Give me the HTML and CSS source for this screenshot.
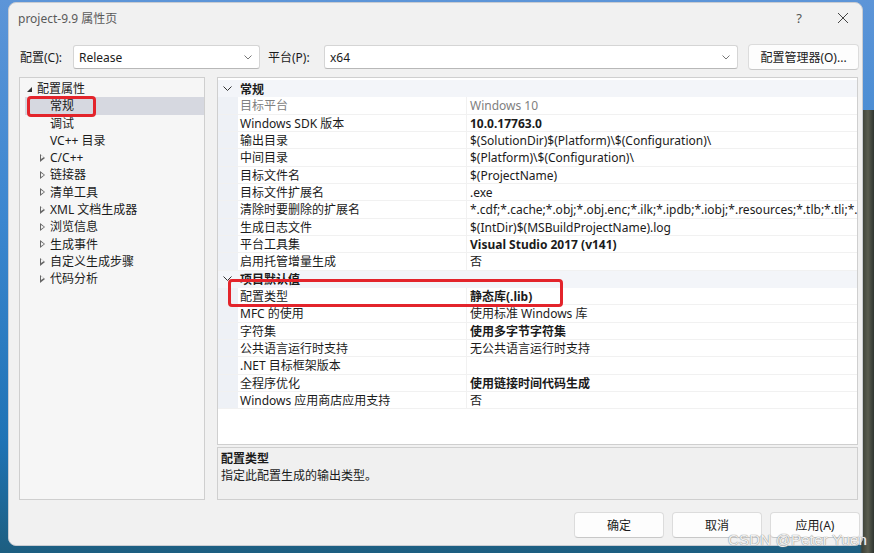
FILE: index.html
```html
<!DOCTYPE html>
<html>
<head>
  <title>project-9.9 属性页</title>
  <link rel="stylesheet" href="styles.css">
</head>
<body>
  <div class="dialog">

    <div class="titlebar">
      <div class="title">project-9.9 属性页</div>
      <div class="help">?</div>
      <div class="close">
        <svg width="12" height="12" viewBox="0 0 12 12"><path d="M1 1L11 11M11 1L1 11" stroke="#444" stroke-width="1" fill="none"/></svg>
      </div>
    </div>

    <div class="toolbar">
      <span class="label">配置(C):</span>
      <div class="combo combo-config"><span>Release</span><svg class="arrow" width="8" height="5" viewBox="0 0 8 5"><path d="M0.5 0.5L4 4L7.5 0.5" stroke="#777" fill="none"/></svg></div>
      <span class="label label-platform">平台(P):</span>
      <div class="combo combo-platform"><span>x64</span><svg class="arrow" width="8" height="5" viewBox="0 0 8 5"><path d="M0.5 0.5L4 4L7.5 0.5" stroke="#777" fill="none"/></svg></div>
      <button class="btn btn-manager">配置管理器(O)...</button>
    </div>

    <div class="main">
      <div class="tree">
        <div class="node root"><span class="tri-open"></span>配置属性</div>
        <div class="node leaf selected">常规</div>
        <div class="node leaf">调试</div>
        <div class="node leaf">VC++ 目录</div>
        <div class="node"><span class="tri"></span>C/C++</div>
        <div class="node"><span class="tri"></span>链接器</div>
        <div class="node"><span class="tri"></span>清单工具</div>
        <div class="node"><span class="tri"></span>XML 文档生成器</div>
        <div class="node"><span class="tri"></span>浏览信息</div>
        <div class="node"><span class="tri"></span>生成事件</div>
        <div class="node"><span class="tri"></span>自定义生成步骤</div>
        <div class="node"><span class="tri"></span>代码分析</div>
        <div class="mark mark-tree"></div>
      </div>

      <div class="right">
        <div class="grid">
          <div class="cat"><svg class="chev" width="9" height="6" viewBox="0 0 9 6"><path d="M0.5 0.5L4.5 4.5L8.5 0.5" stroke="#333" fill="none"/></svg><b>常规</b></div>
          <div class="row disabled"><span class="name">目标平台</span><span class="val">Windows 10</span></div>
          <div class="row"><span class="name">Windows SDK 版本</span><span class="val bold">10.0.17763.0</span></div>
          <div class="row"><span class="name">输出目录</span><span class="val">$(SolutionDir)$(Platform)\$(Configuration)\</span></div>
          <div class="row"><span class="name">中间目录</span><span class="val">$(Platform)\$(Configuration)\</span></div>
          <div class="row"><span class="name">目标文件名</span><span class="val">$(ProjectName)</span></div>
          <div class="row"><span class="name">目标文件扩展名</span><span class="val">.exe</span></div>
          <div class="row"><span class="name">清除时要删除的扩展名</span><span class="val">*.cdf;*.cache;*.obj;*.obj.enc;*.ilk;*.ipdb;*.iobj;*.resources;*.tlb;*.tli;*.tlh;*.tmp;*.rsp;*.pgc;*.pgd;*.meta;*.tlog;*.manifest;*.res;*.pch;*.exp</span></div>
          <div class="row"><span class="name">生成日志文件</span><span class="val">$(IntDir)$(MSBuildProjectName).log</span></div>
          <div class="row"><span class="name">平台工具集</span><span class="val bold">Visual Studio 2017 (v141)</span></div>
          <div class="row"><span class="name">启用托管增量生成</span><span class="val">否</span></div>
          <div class="cat"><svg class="chev" width="9" height="6" viewBox="0 0 9 6"><path d="M0.5 0.5L4.5 4.5L8.5 0.5" stroke="#333" fill="none"/></svg><b>项目默认值</b></div>
          <div class="row"><span class="name">配置类型</span><span class="val bold">静态库(.lib)</span></div>
          <div class="row"><span class="name">MFC 的使用</span><span class="val">使用标准 Windows 库</span></div>
          <div class="row"><span class="name">字符集</span><span class="val bold">使用多字节字符集</span></div>
          <div class="row"><span class="name">公共语言运行时支持</span><span class="val">无公共语言运行时支持</span></div>
          <div class="row"><span class="name">.NET 目标框架版本</span><span class="val"></span></div>
          <div class="row"><span class="name">全程序优化</span><span class="val bold">使用链接时间代码生成</span></div>
          <div class="row"><span class="name">Windows 应用商店应用支持</span><span class="val">否</span></div>
          <div class="mark mark-grid"></div>
        </div>

        <div class="desc">
          <div class="desc-title">配置类型</div>
          <div>指定此配置生成的输出类型。</div>
        </div>
      </div>
    </div>

    <div class="footer">
      <button class="btn">确定</button>
      <button class="btn">取消</button>
      <button class="btn">应用(A)</button>
    </div>

  </div>

  <div class="watermark">CSDN @Peter Yuen</div>
</body>
</html>
```

FILE: styles.css
```css
html, body{ margin: 0; padding: 0; }
body{ width: 874px; height: 553px; overflow: hidden; position: relative;
  font-family: "Noto Sans", "Noto Sans CJK SC", sans-serif; font-size: 12px; color: #1b1b1b;
  background:
    linear-gradient(90deg, rgba(0,0,0,0) 860px, #3d4238 862px, #5a5d50 868px, #2e3530 874px) 0 110px / 874px 443px no-repeat,
    linear-gradient(180deg, #5d95d8 0, #3b86cf 40%, #1f73b5 80%, #1d5e80 100%); }

.dialog{ margin: 2px 0 0 8px; width: 855px; height: 544px; box-sizing: border-box; background: #f1f1f1;
  border: 1px solid #c9ccd2; border-radius: 8px; display: flex; flex-direction: column; }

.titlebar{ height: 29px; display: flex; align-items: center; padding-left: 9px; color: #5a5a5a; }
.title{ flex: 1; font-size: 12px; }
.help{ width: 20px; text-align: center; font-size: 13px; color: #555; margin-right: 28px; }
.close{ width: 12px; height: 12px; margin-right: 13px; display: flex; }

.toolbar{ margin-top: 12px; height: 26px; display: flex; align-items: center; padding-left: 11px; }
.label{ width: 53px; color: #1b1b1b; }
.label-platform{ margin-left: 8px; width: 56px; }
.combo{ height: 24px; box-sizing: border-box; background: #fff; border: 1px solid #d5d5d5; border-bottom-color: #b8b8b8;
  border-radius: 3px; display: flex; align-items: center; padding: 0 7px 0 5px; }
.combo span{ flex: 1; }
.combo-config{ width: 187px; }
.combo-platform{ width: 414px; }
.arrow{ display: block; }

.btn{ font-family: "Noto Sans", "Noto Sans CJK SC", sans-serif; font-size: 12px; color: #1b1b1b; background: #fdfdfd;
  border: 1px solid #dcdcdc; border-bottom-color: #c8c8c8; border-radius: 4px; height: 26px; padding: 0; }
.btn-manager{ margin-left: 10px; width: 111px; }

.main{ margin-top: 7px; height: 423px; display: flex; gap: 12px; padding-left: 10px; }

.tree{ width: 186px; box-sizing: border-box; background: #f6f6f6; border: 1px solid #cfcfcf; padding-top: 2px; position: relative; }
.node{ height: 17.3px; line-height: 17.3px; padding-left: 30px; white-space: nowrap; display: flex; align-items: center; }
.node.root{ padding-left: 7px; }
.node.leaf{ padding-left: 30px; }
.node.selected{ background: #d6d8e0; margin-left: 5px; padding-left: 25px; }
.tri{ width: 0; height: 0; border-top: 4px solid transparent; border-bottom: 4px solid transparent; border-left: 5px solid #666;
  position: relative; margin-left: -10px; margin-right: 5px; }
.tri::after{ content: ""; position: absolute; left: -4px; top: -2.5px; border-top: 2.5px solid transparent; border-bottom: 2.5px solid transparent; border-left: 3px solid #f6f6f6; }
.tri-open{ width: 0; height: 0; border-left: 5px solid transparent; border-bottom: 5px solid #333; margin-right: 5px; margin-top: 2px; }

.right{ width: 641px; display: flex; flex-direction: column; gap: 2px; }
.grid{ height: 368px; box-sizing: border-box; background: #fff; border: 1px solid #cfcfcf; padding-top: 2px; position: relative; overflow: hidden; }
.cat{ height: 17.33px; display: flex; align-items: center; background: #f3f5f9; padding-left: 5px; }
.cat .chev{ margin-right: 8px; }
.cat b{ font-weight: bold; }
.row{ height: 17.33px; line-height: 17px; display: flex; box-sizing: border-box; border-bottom: 1px solid #f1f1f1;
  background: linear-gradient(90deg, #eef1f6 20px, #fff 20px); padding-left: 20px; white-space: nowrap; }
.name{ width: 226px; padding-left: 2px; flex: none; }
.val{ padding-left: 3px; overflow: hidden; flex: 1; border-left: 1px solid #f1f1f1; }
.bold{ font-weight: bold; }
.disabled{ color: #808080; }

.desc{ height: 53px; box-sizing: border-box; background: #f0f0f0; border: 1px solid #cfcfcf; padding: 2px 3px; line-height: 17px; }
.desc-title{ font-weight: bold; }

.mark{ position: absolute; border: 3px solid #e3242b; border-radius: 4px; box-sizing: border-box; }
.mark-tree{ left: 7px; top: 18px; width: 69px; height: 21px; }
.mark-grid{ left: 10px; top: 201px; width: 335px; height: 28px; }

.footer{ margin-top: 12px; display: flex; justify-content: flex-end; gap: 8px; padding-right: 2px; }
.footer .btn{ width: 90px; }

.watermark{ position: absolute; left: 728px; top: 531px; font-family: "Liberation Sans", sans-serif; font-size: 15px;
  color: rgba(255,255,255,0.9); text-shadow: 0 0 1px #8a8a8a, 0 0 1px #8a8a8a; letter-spacing: 0.2px; }
```
